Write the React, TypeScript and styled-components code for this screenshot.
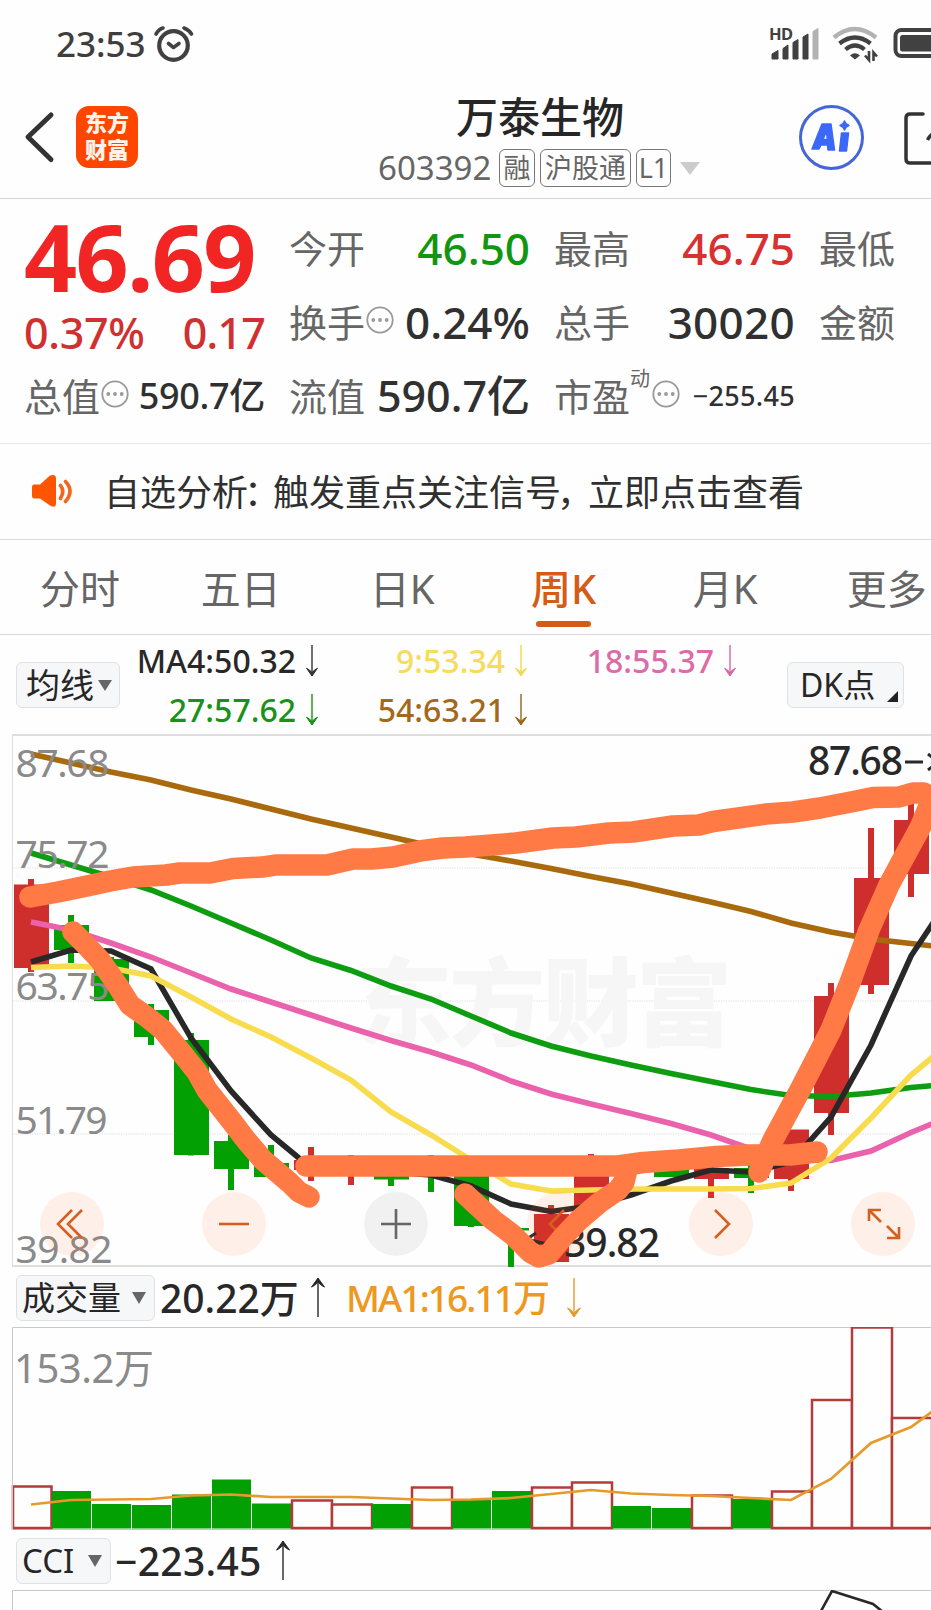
import React from "react";
import styled, { createGlobalStyle } from "styled-components";

const FONT = '"Noto Sans", "Noto Sans CJK SC", sans-serif';

const GlobalStyle = createGlobalStyle`
  *, *::before, *::after { box-sizing: border-box; }
  html, body { margin: 0; padding: 0; background: #fefefe; }
  body { font-family: ${FONT}; color: #2b2b2b; overflow: hidden; }
  button { font: inherit; color: inherit; margin: 0; padding: 0; }
`;

const Screen = styled.div`
  width: 931px;
  height: 1610px;
  overflow: hidden;
  display: flex;
  flex-direction: column;
  background: #fefefe;
  white-space: nowrap;
`;

const StatusBar = styled.div`
  height: 80px;
  flex: none;
  display: flex;
  align-items: center;
  padding: 8px 0 0 56px;
`;

const Clock = styled.span`
  font-size: 35px;
  line-height: 40px;
  font-weight: 500;
  color: #3e3e3e;
  width: 97px;
`;

const StatusIcons = styled.div`
  margin-left: auto;
  display: flex;
  align-items: center;
`;

const Header = styled.header`
  height: 119px;
  flex: none;
  display: flex;
  border-bottom: 1px solid #d4d4d4;
`;

const HeaderSide = styled.div<{ $w: number }>`
  width: ${(p) => p.$w}px;
  flex: none;
  display: flex;
  align-items: flex-start;
  padding-top: 24px;
`;

const AppLogo = styled.div`
  width: 62px;
  height: 62px;
  margin: 2px 0 0 20px;
  border-radius: 13px;
  background: #ff4600;
  color: #fff4ec;
  font-weight: 900;
  font-size: 22px;
  line-height: 27px;
  text-align: center;
  padding-top: 3px;
  span { display: block; }
`;

const TitleBlock = styled.div`
  flex: 1;
  padding-top: 10px;
`;

const StockName = styled.h1`
  margin: 0 0 0 79px;
  font-size: 42px;
  line-height: 54px;
  font-weight: 500;
  color: #262626;
`;

const CodeLine = styled.div`
  display: flex;
  align-items: center;
  height: 38px;
  margin-top: 5px;
  font-size: 33px;
  color: #666;
`;

const Code = styled.span`
  width: 122px;
  line-height: 36px;
  padding-left: 1px;
`;

const Tag = styled.span<{ $w: number }>`
  width: ${(p) => p.$w}px;
  height: 38px;
  margin-right: 5px;
  border: 1px solid #777;
  border-radius: 6px;
  font-size: 27px;
  line-height: 36px;
  text-align: center;
`;

const Caret = styled.i<{ $w: number; $h: number; $c: string }>`
  display: inline-block;
  flex: none;
  border-left: ${(p) => p.$w / 2}px solid transparent;
  border-right: ${(p) => p.$w / 2}px solid transparent;
  border-top: ${(p) => p.$h}px solid ${(p) => p.$c};
`;

const TagCaret = styled(Caret)`
  margin-left: 4px;
`;

const Quote = styled.section`
  height: 245px;
  flex: none;
  display: grid;
  grid-template-columns: 241px 241px 241px 120px;
  column-gap: 24px;
  padding-left: 24px;
  border-bottom: 1px solid #e8e8e8;
`;

const QuoteColumn = styled.div`
  display: flex;
  flex-direction: column;
  padding-top: 12px;
`;

const QuoteCell = styled.div`
  height: 74px;
  display: flex;
  align-items: center;
  justify-content: space-between;
`;

const BigPrice = styled.div`
  height: 90px;
  font-size: 93px;
  line-height: 90px;
  font-weight: 700;
  color: #f22525;
  letter-spacing: -1.6px;
`;

const ChangeRow = styled.div`
  height: 58px;
  display: flex;
  align-items: center;
  justify-content: space-between;
  padding-top: 5px;
`;

const Label = styled.span`
  display: flex;
  align-items: center;
  font-size: 38px;
  line-height: 50px;
  color: #666;
  svg { margin: 0 0 4px 1px; }
`;

const Sup = styled.sup`
  font-size: 20px;
  line-height: 16px;
  align-self: flex-start;
  margin-right: 1px;
`;

const Value = styled.span<{ $size?: number; $c?: string; $ls?: number }>`
  font-size: ${(p) => p.$size ?? 44}px;
  line-height: 50px;
  font-weight: 500;
  color: ${(p) => p.$c ?? "#303030"};
  letter-spacing: ${(p) => p.$ls ?? 0}px;
`;

const Notice = styled.section`
  height: 96px;
  flex: none;
  display: flex;
  align-items: center;
  padding-left: 31px;
  border-bottom: 1px solid #d8d8d8;
`;

const NoticeText = styled.p`
  margin: 3px 0 0 31px;
  font-size: 36px;
  line-height: 50px;
  color: #303030;
  font-weight: 400;
`;

const Punct = styled.span<{ $w: number }>`
  display: inline-block;
  width: ${(p) => p.$w}px;
  text-indent: -4px;
`;

const Tabs = styled.nav`
  height: 95px;
  flex: none;
  display: grid;
  grid-template-columns: 160px repeat(5, 161.5px);
  border-bottom: 1px solid #d8d8d8;
`;

const Tab = styled.button<{ $active?: boolean }>`
  border: 0;
  background: none;
  display: flex;
  flex-direction: column;
  align-items: center;
  padding-top: 23px;
  font-size: 40px;
  line-height: 52px;
  color: ${(p) => (p.$active ? "#d55c17" : "#666")};
  font-weight: ${(p) => (p.$active ? 500 : 400)};
  &::after {
    content: "";
    width: 55px;
    height: 6px;
    margin-top: 6px;
    border-radius: 3px;
    background: ${(p) => (p.$active ? "#d55c17" : "transparent")};
  }
`;

const AverageBar = styled.section`
  height: 99px;
  flex: none;
  display: flex;
  padding-left: 16px;
`;

const Picker = styled.button<{ $w: number; $size?: number }>`
  width: ${(p) => p.$w}px;
  height: 46px;
  flex: none;
  display: flex;
  align-items: center;
  justify-content: space-between;
  border: 1px solid #e0e1e3;
  border-radius: 6px;
  background: #f6f7f9;
  font-size: ${(p) => p.$size ?? 33}px;
  line-height: 42px;
  color: #262626;
  padding: 0 8px 0 5px;
`;

const AveragePicker = styled(Picker)`
  margin-top: 27px;
  padding: 0 7px 0 9px;
`;

const DKPicker = styled(Picker)`
  margin: 27px 0 0 50px;
  padding: 0 5px 0 12px;
  svg { align-self: flex-end; margin-bottom: 5px; }
`;

const AverageGrid = styled.div`
  display: grid;
  width: 617px;
  flex: none;
  grid-template-columns: 197px 209px 209px;
  grid-template-rows: 49px 49px;
  padding-top: 1px;
`;

const AverageItem = styled.div<{ $c: string }>`
  display: flex;
  align-items: center;
  justify-content: flex-end;
  font-size: 32px;
  line-height: 44px;
  font-weight: 500;
  color: ${(p) => p.$c};
  svg { margin: 0 -1px 0 10px; }
`;

const ChartPanel = styled.section<{ $h: number }>`
  position: relative;
  height: ${(p) => p.$h}px;
  flex: none;
  > svg { display: block; }
`;

const Overlay = styled.div`
  position: absolute;
  inset: 0;
  > svg { display: block; }
`;

const Controls = styled.div`
  position: absolute;
  left: 40px;
  bottom: 12px;
  display: flex;
  gap: 98.2px;
`;

const RoundButton = styled.button<{ $muted?: boolean }>`
  width: 64px;
  height: 64px;
  flex: none;
  border: 0;
  border-radius: 50%;
  background: ${(p) => (p.$muted ? "rgba(0,0,0,.05)" : "rgba(255,90,20,.09)")};
  svg { display: block; }
`;

const IndicatorBar = styled.section<{ $h: number }>`
  height: ${(p) => p.$h}px;
  flex: none;
  display: flex;
  align-items: center;
  padding-left: 16px;
`;

const IndicatorValue = styled.span<{ $c?: string; $ml: number; $w: number; $ls?: number; $size?: number }>`
  margin-left: ${(p) => p.$ml}px;
  width: ${(p) => p.$w}px;
  flex: none;
  font-size: ${(p) => p.$size ?? 39}px;
  line-height: 50px;
  font-weight: 500;
  letter-spacing: ${(p) => p.$ls ?? 0}px;
  color: ${(p) => p.$c ?? "#282828"};
`;

const ThinArrow = ({ c, up, w = 12, h = 31 }: { c: string; up?: boolean; w?: number; h?: number }) => (
  <svg width={w} height={h} viewBox={`0 0 ${w} ${h}`}>
    <g transform={up ? `rotate(180 ${w / 2} ${h / 2})` : undefined}>
      <path d={`M${w / 2} 0V${h - 2}`} stroke={c} strokeWidth="1.4" />
      <path d={`M.5 ${h - w * 0.65}Q${w / 2} ${h - w * 0.42} ${w / 2} ${h - 2.4}Q${w / 2} ${h - w * 0.42} ${w - 0.5} ${h - w * 0.65}L${w / 2} ${h}Z`} fill={c} stroke={c} strokeWidth="1" />
    </g>
  </svg>
);

const MoreDots = () => (
  <svg width="28" height="28" viewBox="0 0 28 28">
    <circle cx="14" cy="14" r="12.7" fill="none" stroke="#999" strokeWidth="1.8" />
    {[7.3, 14, 20.7].map((x) => <circle key={x} cx={x} cy="14" r="1.9" fill="#999" />)}
  </svg>
);

type Point = [number, number];
const path = (pts: Point[]) => pts.map((p) => p.join(",")).join(" ");
const cx = (i: number) => 31 + 40 * i;
const series = (ys: number[]): string => path(ys.map((y, i) => [cx(i), y] as Point));

const RED = "#cf2f2c";
const GREEN = "#03a003";

// [up, wick top, body top, body bottom, wick bottom]
const candles: [boolean, number, number, number, number][] = [
  [true, 879, 884.5, 968, 972], [false, 915, 925, 950, 963], [false, 957, 959, 1001, 1001],
  [false, 1004, 1010, 1037, 1045], [false, 1033, 1040, 1155, 1155.5], [false, 1135, 1141, 1169, 1190],
  [false, 1145, 1163, 1177, 1177], [true, 1147, 1160, 1170, 1181], [true, 1155, 1160, 1170, 1185],
  [false, 1160, 1165, 1179.5, 1186], [false, 1155, 1160, 1170, 1192], [false, 1160, 1170, 1226, 1227],
  [false, 1229, 1228, 1230.5, 1267], [true, 1205, 1214, 1262, 1262], [true, 1154, 1170, 1209, 1209],
  [true, 1160, 1162, 1170, 1170], [false, 1160, 1168, 1177, 1177], [true, 1160, 1168, 1179, 1198],
  [false, 1160, 1168, 1178, 1193], [true, 1130, 1129.5, 1179, 1191], [true, 983, 996, 1113, 1135],
  [true, 828, 878, 985, 994], [true, 803, 820, 874, 897],
];

const averages: [string, number[]][] = [
  ["#a9690d", [754, 763, 772, 780, 790, 799, 809, 819, 828, 837, 846, 854, 861, 868.5, 876.5, 884, 893, 902, 911.5, 923, 932, 939, 943.5, 948]],
  ["#0e9c10", [853, 865, 877, 890, 906, 923, 940, 958, 970.5, 986, 999, 1016, 1033, 1046, 1056, 1065, 1073.5, 1081.6, 1089.6, 1095.5, 1096.5, 1093, 1087.5, 1084]],
  ["#ea62ac", [922, 930, 943, 957, 973, 989, 1002, 1015, 1028, 1040.5, 1052, 1065, 1081, 1094, 1104, 1113.5, 1123.5, 1135, 1149, 1160, 1160.5, 1151, 1132.5, 1116]],
  ["#282828", [962, 950, 951, 969, 1038, 1091, 1135, 1168, 1172, 1172, 1175, 1186, 1204, 1211.5, 1206, 1195, 1181, 1170, 1172, 1162, 1117, 1045, 956, 896]],
  ["#f8dc4e", [967.5, 966, 968, 976, 997, 1019, 1037, 1058, 1080, 1112, 1135, 1160, 1184, 1191, 1190, 1189, 1189, 1189, 1188.5, 1183, 1158, 1118, 1075, 1042]],
];

const marker: Point[][] = [
  [[30, 897], [58, 892], [87, 886], [110, 881], [133, 877], [166, 875], [180, 873], [210, 873], [233, 868.5], [262, 867], [275, 865], [327, 865], [353, 859], [372, 859], [393, 857], [423, 850.5], [443, 848], [466, 847], [516, 843], [553, 838], [576, 837], [609, 833], [633, 832], [673, 826], [699, 825], [713, 821.5], [766, 814], [793, 812], [820, 808], [856, 801], [873, 797.5], [899, 797], [913, 793], [924, 793], [931, 801], [920, 828], [903, 859], [889, 885], [869, 930], [851, 980], [831, 1030], [799, 1092], [773, 1140], [759, 1172]],
  [[73, 932], [84, 943], [100, 960], [118, 986], [130, 1005], [147, 1017], [163, 1030], [185, 1057], [197, 1072], [207, 1090], [233, 1123], [246, 1140], [263, 1160], [290, 1183], [299, 1192], [309, 1197]],
  [[306, 1166], [466, 1166], [618, 1166], [643, 1162.5], [679, 1160], [716, 1156.5], [749, 1155], [790, 1155], [817, 1152]],
  [[465, 1194], [493, 1220], [513, 1235], [530, 1252], [539, 1257], [549, 1254], [563, 1237], [579, 1220], [599, 1203], [618, 1190], [624, 1182], [626, 1174]],
];

const yLabels: [string, number, number][] = [["87.68", 777, 94], ["75.72", 868, 94], ["63.75", 1000, 94], ["51.79", 1133.5, 92], ["39.82", 1262.5, 97]];

const volumes: [boolean, number][] = [
  [true, 1486], [false, 1491], [false, 1504], [false, 1505], [false, 1494.5], [false, 1479.5], [false, 1503.5],
  [true, 1500], [true, 1504], [false, 1504], [true, 1487], [false, 1500], [false, 1491], [true, 1487],
  [true, 1482], [false, 1506], [false, 1508], [true, 1495], [false, 1499], [true, 1491], [true, 1399.5],
  [true, 1327], [true, 1417.5],
];
const volumeAverage = [1504.5, 1500, 1499.5, 1499, 1495.5, 1494.5, 1497, 1497, 1497, 1498.5, 1500, 1499.5, 1498, 1494, 1490, 1493.5, 1495, 1496, 1498, 1500, 1479, 1443, 1427, 1398];

const PriceChart = () => (
  <svg width="931" height="535" viewBox="0 734 931 535" fontFamily={FONT}>
    <g stroke="#dedede" fill="none">
      <path d="M12.5 735V1266" />
      <path d="M12 735H931M12 1266H931" strokeWidth="2" />
      <path d="M13 868H931M13 1001H931M13 1134H931" strokeDasharray="1.2 1.2" strokeWidth="1" />
    </g>
    <text x="356" y="1038" fontSize="96" fontWeight="900" fill="#f6f6f6" textLength="376">东方财富</text>
    {candles.map(([up, t, a, b, l], i) => (
      <g key={i} fill={up ? RED : GREEN}>
        <rect x={cx(i) - 3} y={t} width="6" height={l - t} />
        <rect x={cx(i) - 17} y={a} width="35" height={b - a} />
      </g>
    ))}
    {averages.map(([c, ys]) => (
      <polyline key={c} points={series(ys)} fill="none" stroke={c} strokeWidth="5.6" />
    ))}
    <g fontSize="39" fill="#8a8a8a">
      {yLabels.map(([t, y, w]) => <text key={t} x="15.5" y={y} textLength={w}>{t}</text>)}
    </g>
    <g fontSize="39" fontWeight="500" fill="#282828">
      <text x="808" y="775" textLength="95">87.68</text>
      <text x="564" y="1257" textLength="96">39.82</text>
    </g>
    <path d="M905 762H923M928 754L938 762L928 770M560 1247L530 1240M536 1233L527 1239L540 1244" fill="none" stroke="#282828" strokeWidth="3" />
  </svg>
);

const VolumeChart = () => (
  <svg width="931" height="204" viewBox="0 1327 931 204" fontFamily={FONT}>
    <path d="M931 1327.5H12.5V1529" fill="none" stroke="#c9c9c9" />
    <path d="M12 1529.5H931" stroke="#b9d2b4" />
    <text x="14" y="1383" fontSize="40" fill="#8a8a8a" textLength="140">153.2万</text>
    {volumes.map(([up, top], i) =>
      up ? (
        <rect key={i} x={i ? 12 + 40 * i : 13} y={top + 0.5} width={i ? 40 : 38.5} height={1528 - top - 0.5} fill="#fefefe" stroke="#b33b39" strokeWidth="2.5" />
      ) : (
        <rect key={i} x={12 + 40 * i} y={top} width="39" height={1528.5 - top} fill={GREEN} />
      )
    )}
    <path d="M12.5 1480V1530" stroke="#c9c9c9" />
    <polyline points={series(volumeAverage)} fill="none" stroke="#e79a2c" strokeWidth="2.7" />
  </svg>
);

const ORANGE = "#d3601f";
const controlIcons = [
  "M32 18L18 32L32 46M42 18L28 32L42 46",
  "M17 32H47",
  "M17 32H47M32 17V47",
  "M37 18L23 32L37 46",
  "M26 18L40 32L26 46",
  "M18 29V18H30M18 18L30 30M48 35V46H36M48 46L36 34",
];

export default function App() {
  return (
    <>
      <GlobalStyle />
      <Screen>
        <StatusBar>
          <Clock>23:53</Clock>
          <svg width="42" height="40" viewBox="0 0 42 40" fill="none" stroke="#414141" strokeLinecap="round">
            <circle cx="20.5" cy="21.5" r="14.3" strokeWidth="4.2" />
            <path d="M15.5 19.5L20.5 23.5L26 19.5" strokeWidth="3.6" strokeLinejoin="round" />
            <path d="M3 10Q6 5 10 4M31 4Q36 6 38.5 10" strokeWidth="3.6" />
          </svg>
          <StatusIcons>
            <svg width="163" height="42" viewBox="768 24 163 42">
              <text x="769" y="41" fontFamily={FONT} fontSize="16.5" fontWeight="700" fill="#414141" textLength="24">HD</text>
              <g fill="#414141">
                <path d="M772 55l6-3.500v8.500h-6zM783 49.500l5-3.500v14h-5zM793 43.500l5-3v19.500h-5zM803 38l5-3v25h-5z" strokeLinejoin="round" stroke="#414141" strokeWidth="1" />
                <path d="M813 32.500l5-3v30.500h-5z" fill="#b2b2b2" stroke="#b2b2b2" strokeLinejoin="round" />
                <path d="M855 60.500l-5-4q5-4.500 10 0z" />
              </g>
              <g fill="none" stroke="#414141" strokeWidth="4.2">
                <path d="M834 38.500Q854.500 21.500 876 38.500" stroke="#b2b2b2" strokeWidth="4.500" />
                <path d="M839.500 44.500Q855 32.500 870.500 44.500" />
                <path d="M845.500 50.500Q855 42.500 864.500 50.500" />
              </g>
              <path d="M869 52V61L865 56.500M873.500 62V53.500L877 57.500" fill="none" stroke="#414141" strokeWidth="2.600" />
              <rect x="895.500" y="31" width="60" height="26" rx="6" fill="none" stroke="#414141" strokeWidth="4" />
              <rect x="900" y="36" width="50" height="16.500" rx="2.500" fill="#414141" />
            </svg>
          </StatusIcons>
        </StatusBar>

        <Header>
          <HeaderSide $w={377}>
            <svg width="56" height="66" viewBox="-24 0 56 66">
              <path d="M27 11L4 33L27 55.500" fill="none" stroke="#333" strokeWidth="5" strokeLinecap="round" strokeLinejoin="round" />
            </svg>
            <AppLogo>
              <span>东方</span>
              <span>财富</span>
            </AppLogo>
          </HeaderSide>
          <TitleBlock>
            <StockName>万泰生物</StockName>
            <CodeLine>
              <Code>603392</Code>
              <Tag $w={36}>融</Tag>
              <Tag $w={91}>沪股通</Tag>
              <Tag $w={35}>L1</Tag>
              <TagCaret $w={20} $h={13} $c="#ccc" />
            </CodeLine>
          </TitleBlock>
          <HeaderSide $w={134}>
            <svg width="134" height="68" viewBox="797 103 134 68">
              <circle cx="831.500" cy="136.500" r="31" fill="none" stroke="#4466d8" strokeWidth="3" />
              <g fill="#3b68f8" stroke="#3b68f8" strokeWidth="1.500" strokeLinejoin="round">
                <path fillRule="evenodd" d="M812 148L822 123H831L834.500 149H828L827.500 144H821L819 148ZM823 138.500H827.300L826.500 130Z" />
                <path d="M841.500 132H848.500L846.500 150H839.500Z" />
                <path d="M844.500 120Q845.500 123.500 849 124.500Q845.500 125.500 844.500 129Q843.500 125.500 840 124.500Q843.500 123.500 844.500 120Z" />
              </g>
              <path d="M923 113H910Q906 113 906 117V158Q906 162 910 162H940" fill="none" stroke="#333" strokeWidth="3.500" strokeLinecap="round" />
              <path d="M927.500 139Q930.500 133 937 130" fill="none" stroke="#333" strokeWidth="3.500" />
            </svg>
          </HeaderSide>
        </Header>

        <Quote>
          <QuoteColumn>
            <BigPrice>46.69</BigPrice>
            <ChangeRow>
              <Value $c="#d03030" $size={43} $ls={-0.3}>0.37%</Value>
              <Value $c="#d03030" $size={43} $ls={-0.8}>0.17</Value>
            </ChangeRow>
            <QuoteCell>
              <Label>总值<MoreDots /></Label>
              <Value $size={36} $ls={-0.3}>590.7亿</Value>
            </QuoteCell>
          </QuoteColumn>
          <QuoteColumn>
            <QuoteCell><Label>今开</Label><Value $c="#129612">46.50</Value></QuoteCell>
            <QuoteCell><Label>换手<MoreDots /></Label><Value>0.24%</Value></QuoteCell>
            <QuoteCell><Label>流值</Label><Value $size={43}>590.7亿</Value></QuoteCell>
          </QuoteColumn>
          <QuoteColumn>
            <QuoteCell><Label>最高</Label><Value $c="#d93030">46.75</Value></QuoteCell>
            <QuoteCell><Label>总手</Label><Value $ls={0.3}>30020</Value></QuoteCell>
            <QuoteCell><Label>市盈<Sup>动</Sup><MoreDots /></Label><Value $size={27} $ls={0.3}>−255.45</Value></QuoteCell>
          </QuoteColumn>
          <QuoteColumn>
            <QuoteCell><Label>最低</Label></QuoteCell>
            <QuoteCell><Label>金额</Label></QuoteCell>
          </QuoteColumn>
        </Quote>

        <Notice>
          <svg width="42" height="36" viewBox="0 0 42 36">
            <path d="M3 10.500H9L19 1.500Q25 -.5 25 4.500V29.500Q25 34.500 19 31.500L9 24.500H3Q1 24.500 1 21.500V13.500Q1 10.500 3 10.500Z" fill="#ff5500" />
            <path d="M29.500 11.500Q34 17 29.500 24.500M34.500 7.500Q43.500 17 34.500 27.500" fill="none" stroke="#f2661e" strokeWidth="3.600" strokeLinecap="round" />
          </svg>
          <NoticeText>
            自选分析<Punct $w={25}>：</Punct>触发重点关注信号<Punct $w={27}>，</Punct>立即点击查看
          </NoticeText>
        </Notice>

        <Tabs>
          <Tab>分时</Tab>
          <Tab>五日</Tab>
          <Tab>日K</Tab>
          <Tab $active>周K</Tab>
          <Tab>月K</Tab>
          <Tab>更多</Tab>
        </Tabs>

        <AverageBar>
          <AveragePicker $w={104} $size={34}>均线<Caret $w={14} $h={11} $c="#666" /></AveragePicker>
          <AverageGrid>
            <AverageItem $c="#282828">MA4:50.32<ThinArrow c="#333" /></AverageItem>
            <AverageItem $c="#f6dc5c">9:53.34<ThinArrow c="#f2d84e" /></AverageItem>
            <AverageItem $c="#dc6ca8">18:55.37<ThinArrow c="#d765a5" /></AverageItem>
            <AverageItem $c="#189218">27:57.62<ThinArrow c="#189218" /></AverageItem>
            <AverageItem $c="#a3691b">54:63.21<ThinArrow c="#98641a" /></AverageItem>
          </AverageGrid>
          <DKPicker $w={117} $size={32}>
            DK点
            <svg width="11" height="11"><path d="M11 0V11H0Z" fill="#222" /></svg>
          </DKPicker>
        </AverageBar>

        <ChartPanel $h={534}>
          <PriceChart />
          <Controls>
            {controlIcons.map((d, i) => (
              <RoundButton key={i} $muted={i === 2}>
                <svg width="64" height="64"><path d={d} fill="none" stroke={i === 2 ? "#666" : ORANGE} strokeWidth="2.600" /></svg>
              </RoundButton>
            ))}
          </Controls>
          <Overlay>
            <svg width="931" height="535" viewBox="0 734 931 535">
              {marker.map((pts, i) => (
                <polyline key={i} points={path(pts)} fill="none" stroke="#ff7a45" strokeWidth="21.500" strokeLinecap="round" strokeLinejoin="round" />
              ))}
            </svg>
          </Overlay>
        </ChartPanel>

        <IndicatorBar $h={59}>
          <Picker $w={139}>成交量<Caret $w={14} $h={12} $c="#666" /></Picker>
          <IndicatorValue $ml={5} $w={151}>20.22万</IndicatorValue>
          <ThinArrow c="#282828" up w={14} h={39} />
          <IndicatorValue $ml={21} $w={221} $c="#ee981f" $size={37} $ls={-1.9}>MA1:16.11万</IndicatorValue>
          <ThinArrow c="#e69a2c" w={14} h={39} />
        </IndicatorBar>

        <ChartPanel $h={204}>
          <VolumeChart />
        </ChartPanel>

        <IndicatorBar $h={59}>
          <Picker $w={95}>CCI<Caret $w={14} $h={12} $c="#666" /></Picker>
          <IndicatorValue $ml={4} $w={161} $ls={0.3}>−223.45</IndicatorValue>
          <ThinArrow c="#282828" up w={14} h={39} />
        </IndicatorBar>

        <ChartPanel $h={20}>
          <svg width="931" height="20" viewBox="0 1590 931 20">
            <path d="M931 1590.500H12.500V1610" fill="none" stroke="#c9c9c9" />
            <path d="M821 1611L832 1591L873 1604L883 1612" fill="none" stroke="#282828" strokeWidth="2.600" />
          </svg>
        </ChartPanel>
      </Screen>
    </>
  );
}
